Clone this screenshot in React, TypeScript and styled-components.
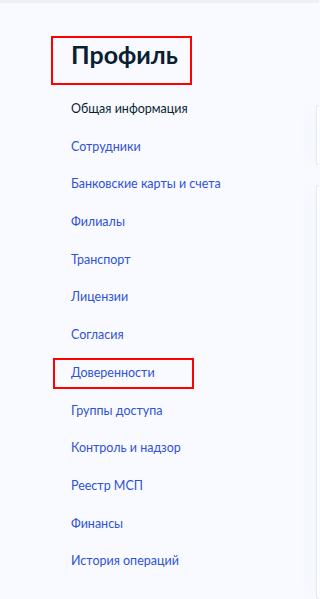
import React, { FC } from "react";
import styled, { createGlobalStyle } from "styled-components";

const GlobalStyle = createGlobalStyle`
  html, body {
    margin: 0;
    padding: 0;
    background: #f8faff;
    font-family: Lato, "Noto Sans", sans-serif;
  }
`;

const Page = styled.div`
  width: 319px;
  height: 599px;
  overflow: hidden;
  border-top: 3px solid #eef0f5;
  box-sizing: border-box;
  display: flex;
`;

const Sidebar = styled.aside`
  width: 316px;
  flex-shrink: 0;
  padding: 33px 0 0 51px;
  box-sizing: border-box;
`;

const Highlight = styled.div<{ $width: number }>`
  width: ${(p) => p.$width}px;
  box-sizing: border-box;
  border: 2px solid #ff0000;
`;

const Title = styled.h1`
  margin: 0;
  padding: 0 0 13px 18px;
  font-size: 25px;
  line-height: 32px;
  font-weight: 700;
  color: #0b1f33;
`;

const Menu = styled.nav`
  display: flex;
  flex-direction: column;
  margin-top: 13px;
`;

const Item = styled.a<{ $active?: boolean }>`
  display: block;
  height: 37.7px;
  line-height: 22px;
  padding: 0 0 0 20px;
  font-size: 12.5px;
  color: ${(p) => (p.$active ? "#0b1f33" : "#3052d6")};
  text-decoration: none;
  cursor: pointer;
`;

const BoxedItem = styled(Highlight)`
  margin: -4px 0 10.7px 2px;
  height: 31px;
  padding-top: 2px;

  ${Item} {
    height: auto;
    padding-left: 16px;
  }
`;

const Cards = styled.div`
  display: flex;
  flex-direction: column;
  gap: 20px;
  padding-top: 102px;
  flex-grow: 1;
`;

const Card = styled.div<{ $height: number }>`
  height: ${(p) => p.$height}px;
  background: #ffffff;
  border: 1px solid #e3e8f4;
  border-right: none;
  border-radius: 8px 0 0 8px;
  box-shadow: -4px 0 14px rgba(200, 210, 235, 0.25);
`;

const items = [
  "Сотрудники",
  "Банковские карты и счета",
  "Филиалы",
  "Транспорт",
  "Лицензии",
  "Согласия",
];

const rest = [
  "Группы доступа",
  "Контроль и надзор",
  "Реестр МСП",
  "Финансы",
  "История операций",
];

const App: FC = () => {
  return (
    <>
      <GlobalStyle />
      <Page>
        <Sidebar>
          <Highlight $width={141}>
            <Title>Профиль</Title>
          </Highlight>
          <Menu>
            <Item $active>Общая информация</Item>
            {items.map((label) => (
              <Item key={label}>{label}</Item>
            ))}
            <BoxedItem $width={141}>
              <Item>Доверенности</Item>
            </BoxedItem>
            {rest.map((label) => (
              <Item key={label}>{label}</Item>
            ))}
          </Menu>
        </Sidebar>
        <Cards>
          <Card $height={70} />
          <Card $height={500} />
        </Cards>
      </Page>
    </>
  );
};

export default App;
